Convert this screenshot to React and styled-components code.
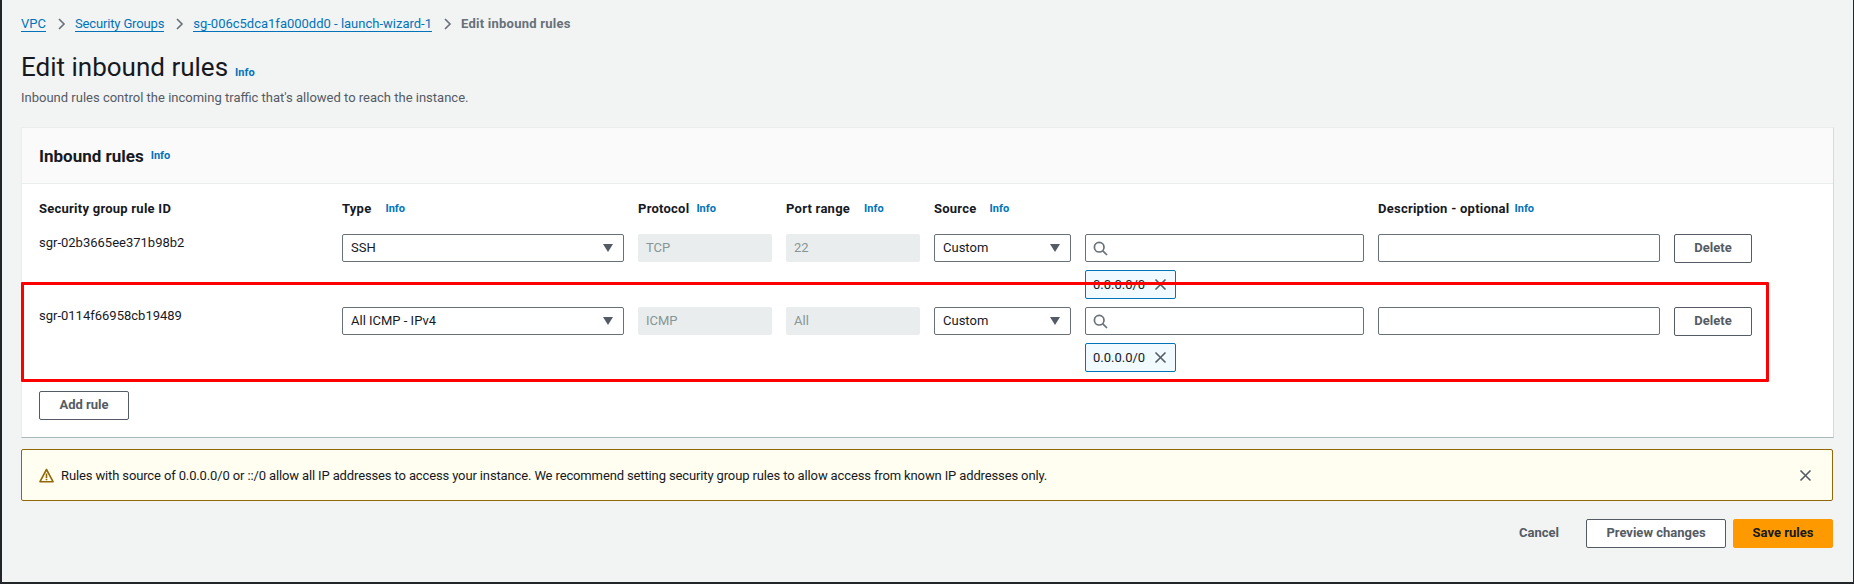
import React from 'react';
import styled, { createGlobalStyle } from 'styled-components';

const GlobalStyle = createGlobalStyle`
  html, body {
    margin: 0;
    padding: 0;
    background: #f2f3f3;
  }
  * {
    box-sizing: border-box;
  }
`;

const Page = styled.div`
  width: 1854px;
  height: 584px;
  padding: 15px 21px 0 19px;
  overflow: hidden;
  background: #f2f3f3;
  border-left: 2px solid #232629;
  border-right: 1px solid #232629;
  border-bottom: 2px solid #232629;
  font-family: 'Roboto', 'Liberation Sans', sans-serif;
  font-size: 13px;
  color: #16191f;
`;

const Breadcrumbs = styled.nav`
  display: flex;
  align-items: center;
  height: 18px;
  line-height: 18px;
`;

const Crumb = styled.a`
  color: #0073bb;
  border-bottom: 1px solid #0073bb;
  line-height: 15px;
  height: 16px;
  letter-spacing: ${p => p.$spacing || 0}px;
`;

const CrumbCurrent = styled.span`
  color: #687078;
  font-weight: 700;
  letter-spacing: 0.25px;
`;

const CrumbSep = styled.svg`
  width: 10px;
  height: 12px;
  margin: 0 8px 0 11px;
  fill: none;
  stroke: #687078;
  stroke-width: 1.6;
`;

const TitleRow = styled.div`
  display: flex;
  align-items: baseline;
  gap: 7px;
  margin-top: 16px;
`;

const Title = styled.h1`
  margin: 0;
  font-size: 26px;
  line-height: 36px;
  font-weight: 400;
`;

const Info = styled.span`
  color: #0073bb;
  font-size: 11px;
  font-weight: 700;
  letter-spacing: 0;
`;

const Subtitle = styled.p`
  margin: 4px 0 0;
  line-height: 18px;
  color: #545b64;
`;

const Card = styled.section`
  margin-top: 20px;
  width: 1813px;
  height: 311px;
  background: #fff;
  border: 1px solid #eaeded;
  border-bottom: 1px solid #aab7b8;
  border-right-color: #d5dbdb;
`;

const CardHeader = styled.header`
  display: flex;
  align-items: center;
  gap: 7px;
  height: 56px;
  padding: 0 17px;
  background: #fafafa;
  border-bottom: 1px solid #eaeded;
`;

const CardTitle = styled.h2`
  margin: 0;
  font-size: 17px;
  font-weight: 700;
`;

const CardBody = styled.div`
  padding: 15px 17px 0;
`;

const RuleGrid = styled.div`
  position: relative;
  display: grid;
  grid-template-columns: 289px 282px 134px 134px 137px 279px 282px 78px;
  column-gap: 14px;
  align-items: start;
  height: ${p => p.$height || 73}px;
`;

const HeadLabel = styled.div`
  display: flex;
  align-items: center;
  gap: ${p => p.$gap || 7}px;
  font-weight: 700;
  height: 18px;
  letter-spacing: 0.25px;
`;

const RuleId = styled.div`
  line-height: 18px;
`;

const SelectBox = styled.div`
  display: flex;
  align-items: center;
  justify-content: space-between;
  height: 28px;
  padding: 0 10px 2px 8px;
  background: #fff;
  border: 1px solid #687078;
  border-radius: 2px;
`;

const Caret = styled.svg`
  width: 10px;
  height: 8px;
  margin-top: 2px;
  fill: #545b64;
`;

const DisabledBox = styled.div`
  display: flex;
  align-items: center;
  height: 28px;
  padding: 0 8px 2px;
  background: #eaeded;
  border-radius: 2px;
  color: #879596;
`;

const SearchColumn = styled.div`
  display: flex;
  flex-direction: column;
  align-items: flex-start;
  gap: 8px;
`;

const SearchBox = styled.div`
  display: flex;
  align-items: center;
  width: 100%;
  height: 28px;
  padding: 0 7px;
  background: #fff;
  border: 1px solid #687078;
  border-radius: 2px;
`;

const SearchIcon = styled.svg`
  width: 15px;
  height: 15px;
  fill: none;
  stroke: #687078;
  stroke-width: 1.7;
`;

const Token = styled.div`
  display: flex;
  align-items: center;
  justify-content: space-between;
  width: 91px;
  height: 29px;
  padding: 0 8px 0 7px;
  background: #f1faff;
  border: 1px solid #0073bb;
  border-radius: 2px;
`;

const CloseIcon = styled.svg`
  width: ${p => p.$size || 13}px;
  height: ${p => p.$size || 13}px;
  fill: none;
  stroke: #545b64;
  stroke-width: 1.6;
`;

const TextBox = styled.div`
  height: 28px;
  background: #fff;
  border: 1px solid #687078;
  border-radius: 2px;
`;

const Button = styled.button`
  height: 29px;
  padding: 0 0 2px;
  width: ${p => p.$width}px;
  background: ${p => (p.$primary ? '#ff9900' : '#fff')};
  border: 1px solid ${p => (p.$primary ? '#ff9900' : '#545b64')};
  border-radius: 2px;
  font-family: inherit;
  font-size: 13px;
  font-weight: 700;
  color: ${p => (p.$primary ? '#16191f' : '#545b64')};
`;

const Highlight = styled.div`
  position: absolute;
  top: -25px;
  left: -18px;
  width: 1748px;
  height: 100px;
  border: 3px solid #ff0000;
  border-radius: 1px;
  pointer-events: none;
`;

const AddRow = styled.div`
  margin-top: 11px;
`;

const Alert = styled.div`
  display: flex;
  align-items: center;
  width: 1812px;
  height: 52px;
  margin-top: 11px;
  padding: 0 20px 0 17px;
  background: #fffef0;
  border: 1px solid #906806;
  border-radius: 2px;
`;

const AlertIcon = styled.svg`
  width: 15px;
  height: 15px;
  margin-right: 7px;
  flex: none;
  fill: none;
  stroke: #906806;
  stroke-width: 1.6;
`;

const AlertText = styled.div`
  flex: 1;
  letter-spacing: -0.13px;
`;

const Footer = styled.div`
  display: flex;
  align-items: center;
  justify-content: flex-end;
  width: 1812px;
  margin-top: 18px;
`;

const CancelLink = styled.span`
  margin-right: 27px;
  margin-bottom: 2px;
  color: #545b64;
  font-weight: 700;
`;

const FooterGap = styled.span`
  width: 7px;
`;

const Dropdown = ({ label }) => (
  <SelectBox>
    <span>{label}</span>
    <Caret viewBox="0 0 10 8">
      <path d="M0 0h10L5 8z" />
    </Caret>
  </SelectBox>
);

const Cross = ({ size }) => (
  <CloseIcon $size={size} viewBox="0 0 13 13">
    <path d="M1.5 1.5l10 10M11.5 1.5l-10 10" />
  </CloseIcon>
);

const Sep = () => (
  <CrumbSep viewBox="0 0 10 12">
    <path d="M2 1l5 5-5 5" />
  </CrumbSep>
);

const rules = [
  { id: 'sgr-02b3665ee371b98b2', type: 'SSH', protocol: 'TCP', port: '22' },
  { id: 'sgr-0114f66958cb19489', type: 'All ICMP - IPv4', protocol: 'ICMP', port: 'All', marked: true },
];

export default function App() {
  return (
    <Page>
      <GlobalStyle />
      <Breadcrumbs>
        <Crumb>VPC</Crumb>
        <Sep />
        <Crumb $spacing={-0.15}>Security Groups</Crumb>
        <Sep />
        <Crumb>sg-006c5dca1fa000dd0 - launch-wizard-1</Crumb>
        <Sep />
        <CrumbCurrent>Edit inbound rules</CrumbCurrent>
      </Breadcrumbs>

      <TitleRow>
        <Title>Edit inbound rules</Title>
        <Info>Info</Info>
      </TitleRow>
      <Subtitle>Inbound rules control the incoming traffic that's allowed to reach the instance.</Subtitle>

      <Card>
        <CardHeader>
          <CardTitle>Inbound rules</CardTitle>
          <Info>Info</Info>
        </CardHeader>
        <CardBody>
          <RuleGrid $height={35}>
            <HeadLabel>Security group rule ID</HeadLabel>
            <HeadLabel $gap={14}>Type <Info>Info</Info></HeadLabel>
            <HeadLabel>Protocol <Info>Info</Info></HeadLabel>
            <HeadLabel $gap={14}>Port range <Info>Info</Info></HeadLabel>
            <HeadLabel $gap={13}>Source <Info>Info</Info></HeadLabel>
            <div />
            <HeadLabel $gap={5}>Description - optional <Info>Info</Info></HeadLabel>
            <div />
          </RuleGrid>
          {rules.map(rule => (
            <RuleGrid key={rule.id}>
              <RuleId>{rule.id}</RuleId>
              <Dropdown label={rule.type} />
              <DisabledBox>{rule.protocol}</DisabledBox>
              <DisabledBox>{rule.port}</DisabledBox>
              <Dropdown label="Custom" />
              <SearchColumn>
                <SearchBox>
                  <SearchIcon viewBox="0 0 15 15">
                    <circle cx="6.2" cy="6.2" r="4.8" />
                    <path d="M9.8 9.8l4.2 4.2" />
                  </SearchIcon>
                </SearchBox>
                <Token>
                  <span>0.0.0.0/0</span>
                  <Cross />
                </Token>
              </SearchColumn>
              <TextBox />
              <Button $width={78}>Delete</Button>
              {rule.marked && <Highlight />}
            </RuleGrid>
          ))}
          <AddRow>
            <Button $width={90}>Add rule</Button>
          </AddRow>
        </CardBody>
      </Card>

      <Alert>
        <AlertIcon viewBox="0 0 15 15">
          <path d="M7.5 1.5L14 13.7H1z" strokeLinejoin="round" />
          <path d="M7.5 5.5v4.4M7.5 10.8v1.4" />
        </AlertIcon>
        <AlertText>
          Rules with source of 0.0.0.0/0 or ::/0 allow all IP addresses to access your instance. We recommend setting security group rules to allow access from known IP addresses only.
        </AlertText>
        <Cross size={13} />
      </Alert>

      <Footer>
        <CancelLink>Cancel</CancelLink>
        <Button $width={140}>Preview changes</Button>
        <FooterGap />
        <Button $width={100} $primary>Save rules</Button>
      </Footer>
    </Page>
  );
}
